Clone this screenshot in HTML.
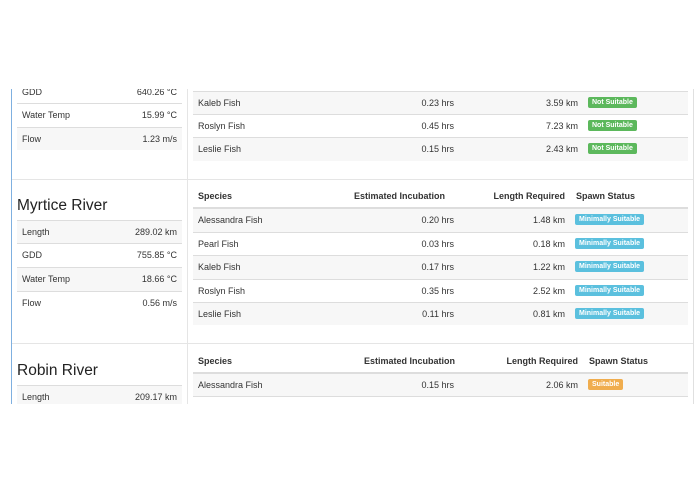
<!DOCTYPE html>
<html><head><style>
body{margin:0;width:695px;height:494px;background:#fff;font-family:"Liberation Sans",sans-serif;font-size:9px;color:#333;position:relative;overflow:hidden}
.a{position:absolute}
.row{position:absolute;height:23px;border-top:1px solid #ddd;box-sizing:border-box}
.g{background:#f7f7f7}
.t{position:absolute;top:6px;white-space:nowrap}
.r{text-align:right}
.b{position:absolute;top:5px;height:11px;line-height:11px;padding:0 4px;border-radius:2px;color:#fff;font-size:7px;font-weight:bold}
.ns{background:#5cb85c}.ms{background:#5bc0de}.su{background:#f0ad4e}
.h{font-weight:bold;white-space:nowrap}
.title{position:absolute;font-size:15.5px;color:#222}
</style></head><body>
<div class="a" style="left:0;top:89px;width:695px;height:315px;overflow:hidden">
<div class="a" style="left:0;top:-89px;width:695px;height:404px">
<div class="a" style="left:11px;top:86px;width:1px;height:318px;background:#7fb0e0"></div>
<div class="a" style="left:187px;top:86px;width:1px;height:318px;background:#e5e5e5"></div>
<div class="a" style="left:693px;top:86px;width:1px;height:318px;background:#e0e0e0"></div>
<div class="a" style="left:12px;top:179px;width:681px;height:1px;background:#e5e5e5"></div>
<div class="a" style="left:12px;top:343px;width:681px;height:1px;background:#e5e5e5"></div>
<!-- section 1 left -->
<div class="row" style="left:17px;top:80px;width:165px"><span class="t" style="left:5px">GDD</span><span class="t r" style="right:5px">640.26 °C</span></div>
<div class="row" style="left:17px;top:103px;width:165px"><span class="t" style="left:5px">Water Temp</span><span class="t r" style="right:5px">15.99 °C</span></div>
<div class="row g" style="left:17px;top:127px;width:165px"><span class="t" style="left:5px">Flow</span><span class="t r" style="right:5px">1.23 m/s</span></div>
<!-- section 1 right -->
<div class="row g" style="left:193px;top:91px;width:495px"><span class="t" style="left:5px">Kaleb Fish</span><span class="t r" style="right:234px">0.23 hrs</span><span class="t r" style="right:110px">3.59 km</span><span class="b ns" style="left:395px">Not Suitable</span></div>
<div class="row" style="left:193px;top:114px;width:495px"><span class="t" style="left:5px">Roslyn Fish</span><span class="t r" style="right:234px">0.45 hrs</span><span class="t r" style="right:110px">7.23 km</span><span class="b ns" style="left:395px">Not Suitable</span></div>
<div class="row g" style="left:193px;top:137px;width:495px;height:24px"><span class="t" style="left:5px">Leslie Fish</span><span class="t r" style="right:234px">0.15 hrs</span><span class="t r" style="right:110px">2.43 km</span><span class="b ns" style="left:395px">Not Suitable</span></div>
<!-- Myrtice -->
<div class="title" style="left:17px;top:197px">Myrtice River</div>
<div class="row g" style="left:17px;top:220px;width:165px"><span class="t" style="left:5px">Length</span><span class="t r" style="right:5px">289.02 km</span></div>
<div class="row" style="left:17px;top:243px;width:165px"><span class="t" style="left:5px">GDD</span><span class="t r" style="right:5px">755.85 °C</span></div>
<div class="row g" style="left:17px;top:267px;width:165px;height:24px"><span class="t" style="left:5px">Water Temp</span><span class="t r" style="right:5px">18.66 °C</span></div>
<div class="row" style="left:17px;top:291px;width:165px"><span class="t" style="left:5px">Flow</span><span class="t r" style="right:5px">0.56 m/s</span></div>

<div class="a h" style="left:198px;top:191px">Species</div>
<div class="a h r" style="right:250px;top:191px">Estimated Incubation</div>
<div class="a h r" style="right:130px;top:191px">Length Required</div>
<div class="a h" style="left:576px;top:191px">Spawn Status</div>
<div class="a" style="left:193px;top:207px;width:495px;height:2px;background:#ddd"></div>
<div class="row g" style="left:193px;top:209px;width:495px;border-top:0"><span class="t" style="left:5px">Alessandra Fish</span><span class="t r" style="right:234px">0.20 hrs</span><span class="t r" style="right:123px">1.48 km</span><span class="b ms" style="left:382px">Minimally Suitable</span></div>
<div class="row" style="left:193px;top:232px;width:495px"><span class="t" style="left:5px">Pearl Fish</span><span class="t r" style="right:234px">0.03 hrs</span><span class="t r" style="right:123px">0.18 km</span><span class="b ms" style="left:382px">Minimally Suitable</span></div>
<div class="row g" style="left:193px;top:255px;width:495px;height:24px"><span class="t" style="left:5px">Kaleb Fish</span><span class="t r" style="right:234px">0.17 hrs</span><span class="t r" style="right:123px">1.22 km</span><span class="b ms" style="left:382px">Minimally Suitable</span></div>
<div class="row" style="left:193px;top:279px;width:495px"><span class="t" style="left:5px">Roslyn Fish</span><span class="t r" style="right:234px">0.35 hrs</span><span class="t r" style="right:123px">2.52 km</span><span class="b ms" style="left:382px">Minimally Suitable</span></div>
<div class="row g" style="left:193px;top:302px;width:495px"><span class="t" style="left:5px">Leslie Fish</span><span class="t r" style="right:234px">0.11 hrs</span><span class="t r" style="right:123px">0.81 km</span><span class="b ms" style="left:382px">Minimally Suitable</span></div>
<!-- Robin -->
<div class="title" style="left:17px;top:362px">Robin River</div>
<div class="row g" style="left:17px;top:385px;width:165px"><span class="t" style="left:5px">Length</span><span class="t r" style="right:5px">209.17 km</span></div>
<div class="a h" style="left:198px;top:356px">Species</div>
<div class="a h r" style="right:240px;top:356px">Estimated Incubation</div>
<div class="a h r" style="right:117px;top:356px">Length Required</div>
<div class="a h" style="left:589px;top:356px">Spawn Status</div>
<div class="a" style="left:193px;top:372px;width:495px;height:2px;background:#ddd"></div>
<div class="row g" style="left:193px;top:374px;width:495px;border-top:0;border-bottom:1px solid #ddd"><span class="t" style="left:5px">Alessandra Fish</span><span class="t r" style="right:234px">0.15 hrs</span><span class="t r" style="right:110px">2.06 km</span><span class="b su" style="left:395px">Suitable</span></div>
</div>
</div>
</body></html>
